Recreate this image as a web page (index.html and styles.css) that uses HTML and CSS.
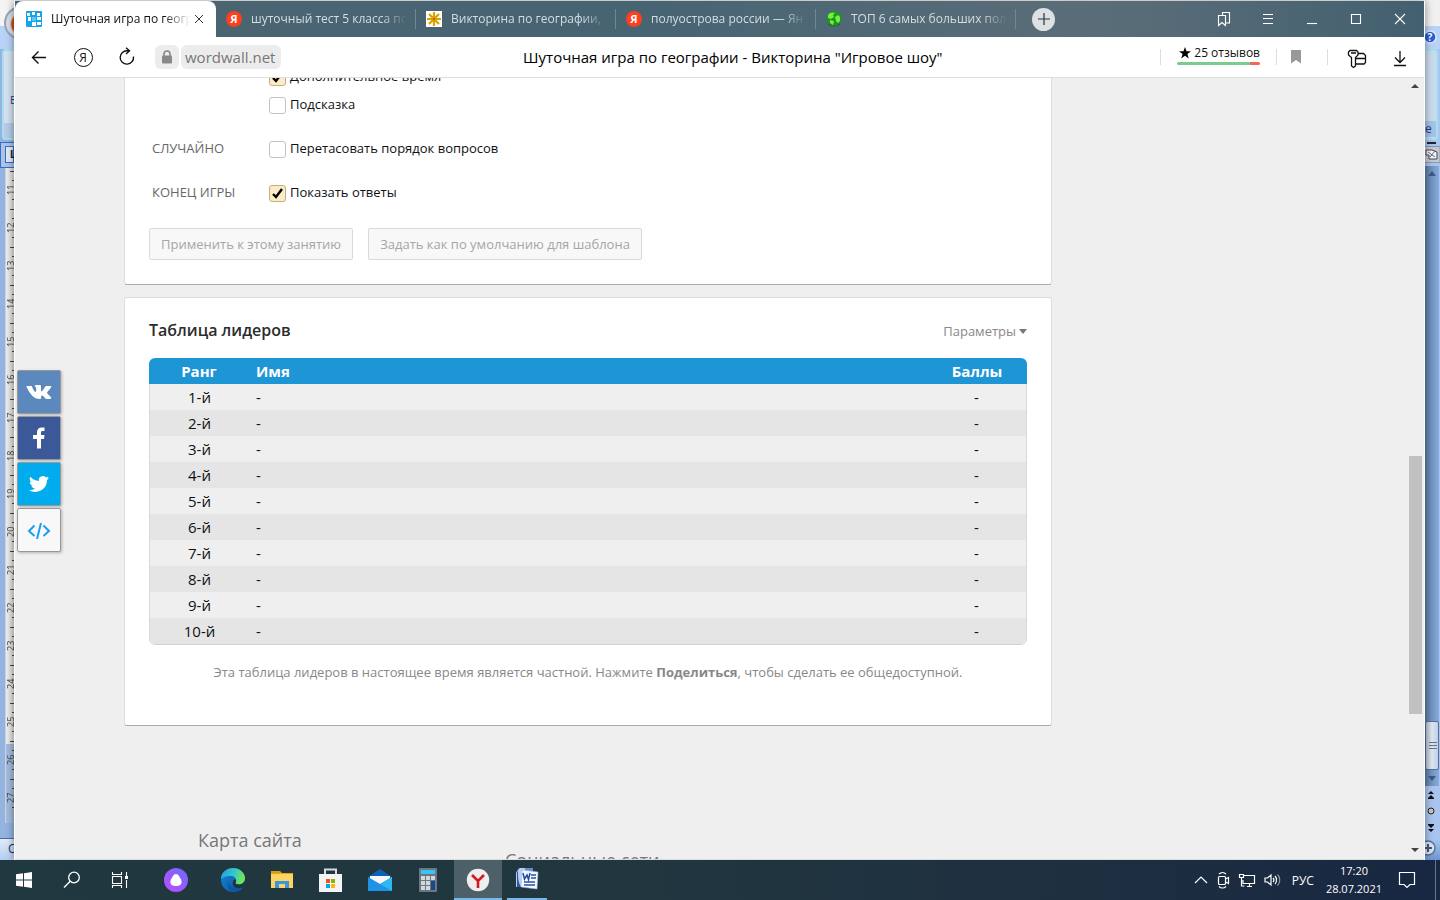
FILE: index.html
```html
<!DOCTYPE html>
<html lang="ru">
<head>
<meta charset="utf-8">
<title>Шуточная игра по географии - Викторина "Игровое шоу"</title>
<link rel="stylesheet" href="styles.css">
</head>
<body>
<div class="desktop">
  <aside class="word-left">
    <div class="word-orb-area"><span class="orb"></span></div>
    <div class="word-ribbon"><span class="ribbon-letter">Б</span></div>
    <div class="word-corner"><span>L</span></div>
    <ol class="ruler">
      <li>11</li><li>12</li><li>13</li><li>14</li><li>15</li><li>16</li><li>17</li><li>18</li><li>19</li><li>20</li><li>21</li><li>22</li><li>23</li><li>24</li><li>25</li><li>26</li><li>27</li>
    </ol>
    <div class="word-status">С</div>
  </aside>

  <main class="window">
    <header class="tabbar">
      <div class="tab tab-active">
        <svg class="favicon" viewBox="0 0 16 16"><rect width="16" height="16" rx="1" fill="#12a5ee"/><g fill="#fff"><path d="M1 2h3v3H1zM6 1h3v3H6zM11 2h3v3h-3zM2 6h3v4H2zM11 6h4v3h-4zM6 11h4v4H6zM11 11h4v3h-4z"/><path d="M6 6h4v4H6z" fill="#5ec6f6"/></g></svg>
        <span class="tab-title">Шуточная игра по геогр</span>
        <button class="tab-close" aria-label="Закрыть"><svg width="10" height="10" viewBox="0 0 10 10"><path d="M1 1l8 8M9 1l-8 8" stroke="#333" fill="none"/></svg></button>
      </div>
      <div class="tab">
        <span class="favicon ya">Я</span>
        <span class="tab-title">шуточный тест 5 класса по</span>
      </div>
      <div class="tab">
        <svg class="favicon" viewBox="0 0 16 16"><rect width="16" height="16" fill="#fff"/><g stroke="#d3a600" stroke-width="2.2"><path d="M8 1v14M1 8h14M3 3l10 10M13 3L3 13"/></g><circle cx="8" cy="8" r="2" fill="#e59a00"/><circle cx="8" cy="8" r="1" fill="#c43"/></svg>
        <span class="tab-title">Викторина по географии,</span>
      </div>
      <div class="tab">
        <span class="favicon ya">Я</span>
        <span class="tab-title">полуострова россии — Ян</span>
      </div>
      <div class="tab">
        <svg class="favicon" viewBox="0 0 16 16"><ellipse cx="8" cy="13" rx="6" ry="2.500" fill="#3e5547"/><circle cx="8" cy="7.500" r="7.300" fill="#159c18"/><path d="M2 4c2-3 5-3 7-2L7 4l1 2-3 2-3-1zM9 6l3-2 2 2v4l-2 2-2-2zM4 9l4 1-1 4-3-2z" fill="#7bea45"/></svg>
        <span class="tab-title">ТОП 6 самых больших пол</span>
      </div>
      <button class="new-tab" aria-label="Новая вкладка"><svg width="12" height="12" viewBox="0 0 12 12"><path d="M6 0v12M0 6h12" stroke="#26343c" stroke-width="1.200"/></svg></button>
      <div class="win-controls">
        <button aria-label="Закладки"><svg width="16" height="16" viewBox="0 0 16 16"><path d="M2.500 4.500h7v10L6 11.500l-3.500 3zM6.500 4V1.500h7V12H10" /></svg></button>
        <button aria-label="Меню"><svg width="16" height="16" viewBox="0 0 16 16"><path d="M3 3.500h10M3 7.500h10M3 12.500h10"/></svg></button>
        <button aria-label="Свернуть"><svg width="16" height="16" viewBox="0 0 16 16"><path d="M3 12.500h10"/></svg></button>
        <button aria-label="Развернуть"><svg width="16" height="16" viewBox="0 0 16 16"><path d="M3.500 3.500h9v9h-9z"/></svg></button>
        <button aria-label="Закрыть окно"><svg width="16" height="16" viewBox="0 0 16 16"><path d="M3 3l10 10M13 3L3 13"/></svg></button>
      </div>
    </header>

    <nav class="toolbar">
      <div class="nav-buttons">
        <button aria-label="Назад"><svg width="20" height="20" viewBox="0 0 20 20"><path d="M17 10.500H3.500M9.500 4.500l-6 6 6 6"/></svg></button>
        <button aria-label="Яндекс"><span class="ya-ring">Я</span></button>
        <button aria-label="Обновить"><svg width="20" height="20" viewBox="0 0 20 20"><path d="M16.500 9.500a6.700 6.700 0 1 1-6-5.700h2M9 .800l3.500 3L9 7"/></svg></button>
      </div>
      <div class="address">
        <button class="lock" aria-label="Безопасность"><svg width="12" height="14" viewBox="0 0 12 14"><path d="M3 6V4a3 3 0 0 1 6 0v2" fill="none" stroke="#888" stroke-width="1.600"/><rect x="1" y="5.500" width="10" height="8" rx="1" fill="#888"/></svg></button>
        <a class="domain" href="#">wordwall.net</a>
      </div>
      <div class="page-title">Шуточная игра по географии - Викторина "Игровое шоу"</div>
      <div class="tools">
        <button class="reviews"><span class="reviews-text"><svg width="12" height="12" viewBox="0 0 12 12"><path d="M6 0l1.500 4.200H12L8.400 6.900 9.800 11.500 6 8.700 2.200 11.500 3.600 6.900 0 4.200h4.500z"/></svg>25 отзывов</span><i class="rating"></i></button>
        <button class="tool" aria-label="В закладки"><svg width="12" height="14" viewBox="0 0 12 14"><path d="M1 0h10v13.500L6 10l-5 3.500z" fill="#999"/></svg></button>
        <button class="tool" aria-label="Пароли"><svg width="20" height="20" viewBox="0 0 20 20" fill="none" stroke="#111" stroke-width="1.300"><path d="M3 1.500h6.500l1.500 1.500v3L8.500 8.500v8.500L6.500 18.500 4.500 17V8.500L1.500 6V3zM4 4h5"/><path d="M11 4.500h5.500L18.500 6.500v7l-1.500 1.500H8.500M8.500 9.500h10"/></svg></button>
        <button class="tool plain" aria-label="Загрузки"><svg width="16" height="18" viewBox="0 0 16 18" fill="none" stroke="#111" stroke-width="1.300"><path d="M8 2v11M3 8.500l5 5 5-5M2 16.500h12"/></svg></button>
      </div>
    </nav>

    <div class="viewport">
      <div class="page">
        <section class="card settings">
          <div class="group">
            <span class="group-name"></span>
            <div class="options">
              <label class="option"><input type="checkbox" checked>Дополнительное время</label>
              <label class="option"><input type="checkbox">Подсказка</label>
            </div>
          </div>
          <div class="group">
            <span class="group-name">СЛУЧАЙНО</span>
            <div class="options"><label class="option"><input type="checkbox">Перетасовать порядок вопросов</label></div>
          </div>
          <div class="group">
            <span class="group-name">КОНЕЦ ИГРЫ</span>
            <div class="options"><label class="option"><input type="checkbox" checked>Показать ответы</label></div>
          </div>
          <div class="actions">
            <button class="btn" disabled>Применить к этому занятию</button>
            <button class="btn" disabled>Задать как по умолчанию для шаблона</button>
          </div>
        </section>

        <section class="card leaders">
          <div class="leaders-head">
            <h2>Таблица лидеров</h2>
            <button class="params">Параметры<i class="caret"></i></button>
          </div>
          <div class="table-wrap">
            <table>
              <thead><tr><th class="rank">Ранг</th><th class="name">Имя</th><th class="score">Баллы</th></tr></thead>
              <tbody>
                <tr><td class="rank">1-й</td><td class="name">-</td><td class="score">-</td></tr>
                <tr><td class="rank">2-й</td><td class="name">-</td><td class="score">-</td></tr>
                <tr><td class="rank">3-й</td><td class="name">-</td><td class="score">-</td></tr>
                <tr><td class="rank">4-й</td><td class="name">-</td><td class="score">-</td></tr>
                <tr><td class="rank">5-й</td><td class="name">-</td><td class="score">-</td></tr>
                <tr><td class="rank">6-й</td><td class="name">-</td><td class="score">-</td></tr>
                <tr><td class="rank">7-й</td><td class="name">-</td><td class="score">-</td></tr>
                <tr><td class="rank">8-й</td><td class="name">-</td><td class="score">-</td></tr>
                <tr><td class="rank">9-й</td><td class="name">-</td><td class="score">-</td></tr>
                <tr><td class="rank">10-й</td><td class="name">-</td><td class="score">-</td></tr>
              </tbody>
            </table>
          </div>
          <p class="note">Эта таблица лидеров в настоящее время является частной. Нажмите <b>Поделиться</b>, чтобы сделать ее общедоступной.</p>
        </section>

        <footer class="footer">
          <h3>Карта сайта</h3>
          <h3 class="social-title">Социальные сети</h3>
        </footer>
      </div>

      <div class="share">
        <a class="share-btn vk" href="#" aria-label="ВКонтакте"><svg width="26" height="16" viewBox="0 0 26 16"><path d="M1 2h4c.8 0 1 .5 1.300 1.200C7.200 5.500 8.500 8 9.500 8c1 0 1-4 .2-5C9.300 2.400 8.500 2.500 8.500 2c.4-.8 1.600-1 3-1h2c1.200 0 1.500.5 1.500 1.500v4c0 1 .6 1.100 1.200.5C17.500 5.700 18.500 4 19.300 2.600c.3-.5.6-.6 1.200-.6h4c.8 0 1 .4.6 1.200C24 5.500 21 8 21 8.700c0 .8 3 3 4 4.600.5.800 0 1.700-1 1.700h-3.500c-1.500 0-3-3.500-4.500-3.500-1 0-.8 1.200-.9 2.500 0 .7-.5 1-1.400 1C8 15 4.500 11 .7 3.300.3 2.500.5 2 1 2z" fill="#fff"/></svg></a>
        <a class="share-btn fb" href="#" aria-label="Facebook"><svg width="14" height="22" viewBox="0 0 14 22"><path d="M5 21.500V12H1V8h4V5.500C5 2 6.800.5 9.800.5H12.500V4h-2C9.200 4 9 4.800 9 5.800V8h3.500l-.5 4H9v9.500z" fill="#fff"/></svg></a>
        <a class="share-btn tw" href="#" aria-label="Twitter"><svg width="22" height="18" viewBox="0 0 22 18"><path d="M21 3c-.7.300-1.500.5-2.300.6.800-.5 1.500-1.300 1.800-2.200-.8.500-1.700.8-2.600 1A4.100 4.100 0 0 0 10.900 6C7.500 5.900 4.500 4.300 2.400 1.800a4 4 0 0 0 1.300 5.400c-.7 0-1.300-.2-1.900-.5 0 2 1.400 3.700 3.300 4-.6.200-1.200.2-1.800.1.500 1.600 2 2.800 3.800 2.800A8.200 8.200 0 0 1 1 15.300 11.600 11.600 0 0 0 7.300 17C15 17 19.200 10.700 19 5.100c.8-.6 1.500-1.300 2-2.100z" fill="#fff"/></svg></a>
        <a class="share-btn embed" href="#" aria-label="Код"><svg width="24" height="18" viewBox="0 0 24 18"><path d="M7.500 4.500L2 10l5.500 5M16.500 4.500L22 10l-5.500 5M14 2l-4 16" fill="none" stroke="#1b9df0" stroke-width="2"/></svg></a>
      </div>

      <div class="scrollbar">
        <i class="arrow up"></i>
        <div class="track"><div class="thumb"></div></div>
        <i class="arrow down"></i>
      </div>
    </div>
  </main>

  <aside class="word-right">
    <div class="wr-title"></div>
    <div class="wr-help"><svg width="15" height="16" viewBox="0 0 15 16"><circle cx="5" cy="8" r="6" fill="#2b5fd0" stroke="#dcebff" stroke-width="1.400"/><text x="5" y="12" text-anchor="middle" font-size="10" font-weight="700" font-family="Open Sans, sans-serif" fill="#fff">?</text></svg></div>
    <div class="wr-ribbon"><span>е</span></div>
    <div class="wr-view"><svg width="15" height="26" viewBox="0 0 15 26"><path d="M2 3h9" stroke="#223" stroke-width="2"/><path d="M0 6.500h15v16H0" fill="#c5c8d2" stroke="#8e97ab"/><path d="M1 10h6l5 2v7H4V15H1z" fill="#f5f7fa" stroke="#445"/><path d="M3 12l7 5M10 11l-5 6" stroke="#667"/></svg></div>
    <div class="wr-scroll">
      <i class="wr-tri up"></i>
      <span class="wr-thumb"></span>
      <i class="wr-tri"></i>
    </div>
    <div class="wr-nav"><svg width="15" height="52" viewBox="0 0 15 52"><g fill="#111"><path d="M3 8l3-3 3 3zM3 12l3-3 3 3zM3 39h6l-3 3zM3 43h6l-3 3z"/><path d="M3 12h6v1H3zM3 38h6v1H3z"/></g><circle cx="6" cy="25" r="3" fill="#c8c8bd" stroke="#222"/></svg></div>
    <div class="wr-zoom"><svg width="15" height="20" viewBox="0 0 15 20"><circle cx="3" cy="10" r="7" fill="#d8e4f2" stroke="#5a7396" stroke-width="1.500"/><path d="M-1 10h8M3 6v8" stroke="#44597a" stroke-width="2"/></svg></div>
  </aside>
</div>

<footer class="taskbar">
  <div class="apps">
    <button class="app" aria-label="Пуск"><svg width="16" height="16" viewBox="0 0 16 16"><path d="M0 2.300l7-1v6.200H0zM8 1.200L16 0v7.500H8zM0 8.500h7v6.200l-7-1zM8 8.500h8V16l-8-1.200z" fill="#fff"/></svg></button>
    <button class="app" aria-label="Поиск"><svg width="18" height="18" viewBox="0 0 18 18"><circle cx="11" cy="6.500" r="5.300" fill="none" stroke="#fff" stroke-width="1.300"/><path d="M7.200 10.300L1 16.500" stroke="#fff" stroke-width="1.400"/></svg></button>
    <button class="app" aria-label="Представление задач"><svg width="18" height="16" viewBox="0 0 18 16"><g fill="none" stroke="#fff" stroke-width="1.100"><path d="M1.500 0v2.500h9V0M1.500 4.500h9v7h-9zM1.500 16v-2.500h9V16M15.500 0v4M15.500 8v8"/></g><path d="M14 4h3v3h-3z" fill="#fff"/></svg></button>
    <button class="app app-alice" aria-label="Алиса"><svg width="24" height="24" viewBox="0 0 24 24"><defs><linearGradient id="al" x1="0" y1="1" x2="1" y2="0"><stop offset="0" stop-color="#c04cff"/><stop offset="1" stop-color="#6a6cff"/></linearGradient></defs><circle cx="12" cy="12" r="12" fill="url(#al)"/><path d="M12 6c2 0 3 2 4.500 4.500S19 18 12 18 6 13 7.500 10.500 10 6 12 6z" fill="#fff"/></svg></button>
    <button class="app app-edge" aria-label="Edge"><svg width="24" height="24" viewBox="0 0 24 24"><defs><linearGradient id="e1" x1="0" y1="0" x2="1" y2=".3"><stop offset="0" stop-color="#1e9bea"/><stop offset=".6" stop-color="#37c8c8"/><stop offset="1" stop-color="#6ee55a"/></linearGradient><linearGradient id="e2" x1="0" y1="0" x2="1" y2="1"><stop offset="0" stop-color="#1488da"/><stop offset="1" stop-color="#0d4f9e"/></linearGradient></defs><circle cx="12" cy="12" r="12" fill="url(#e2)"/><path d="M0 11C0 4 6 0 12 0c7 0 12 5 12 10 0 4-3 6.500-6 6.500-3 0-4-1.200-3.500-2 1.500-2 .5-6-4-6.500C6 7.500 2 9 0 11z" fill="url(#e1)"/><path d="M10 8c-2 1-3 3-2.500 6 .8 5 6 7.500 12.500 5.500 1-.3 2 0 1.500.8C18 25 8 25 7 18c-.3-4 0-8 3-10z" fill="#0c59a4"/><path d="M14.500 14.500c-.5.800.5 2 3.500 2 2.500 0 5-1.500 5.800-4 .2 3-1 5-2 6.500-5 3-11 .5-10-5 .3-2 1.500-2.500 3-2.500.6 1 .4 2.200-.3 3z" fill="#20343b"/></svg></button>
    <button class="app" aria-label="Проводник"><svg width="24" height="22" viewBox="0 0 24 22"><path d="M1 2h9l2 2h11v15H1z" fill="#e3a51a"/><path d="M1 5h22v14H1z" fill="#fcd462"/><path d="M5 19v-7h14v7h-4v-4H9v4z" fill="#3a96dd"/><path d="M1 2h9v2H1z" fill="#d99c0c"/></svg></button>
    <button class="app" aria-label="Магазин"><svg width="24" height="24" viewBox="0 0 24 24"><path d="M7 6V1.500h11V6" fill="none" stroke="#d8dcdf" stroke-width="2"/><path d="M1 6h23v18H1z" fill="#f4f4f4"/><path d="M8 11h4v4H8z" fill="#f25022"/><path d="M13 11h4v4h-4z" fill="#7fba00"/><path d="M8 16h4v4H8z" fill="#00a4ef"/><path d="M13 16h4v4h-4z" fill="#ffb900"/></svg></button>
    <button class="app app-mail" aria-label="Почта"><svg width="24" height="23" viewBox="0 0 24 23"><path d="M0 8l12-8 12 8v3H0z" fill="#0b62b4"/><path d="M2 7h20v8H2z" fill="#f4f6f8"/><path d="M0 8l12 7 12-7v14H0z" fill="#1e93e6"/><path d="M24 8L12 15l12 7z" fill="#2eb8f3"/></svg></button>
    <button class="app" aria-label="Калькулятор"><svg width="18" height="24" viewBox="0 0 18 24"><rect width="18" height="24" rx="1" fill="#6d7781"/><path d="M2 2h14v4H2z" fill="#37c5f2"/><path d="M2 8h4v4H2zM7 8h4v4H7zM12 8h4v4h-4zM2 13h4v4H2zM7 13h4v4H7zM2 18h4v4H2zM7 18h4v4H7z" fill="#d3d8dd"/><path d="M12 13h4v9h-4z" fill="#164a8c"/></svg></button>
    <button class="app app-active" aria-label="Яндекс Браузер"><svg width="24" height="24" viewBox="0 0 24 24"><circle cx="12" cy="12" r="11.200" fill="#eee"/><path d="M6 7l6 6 6-6M12 12v8" fill="none" stroke="#d8181f" stroke-width="2.600"/></svg></button>
    <button class="app app-running" aria-label="Word"><svg width="24" height="24" viewBox="0 0 24 24"><path d="M4 1h14v19H1V5z" fill="#5f8bd8"/><path d="M1 6l4-5h5v19H1z" fill="#b9d0f3"/><path d="M3 4c0 6 0 11 3 16H2V5z" fill="#2c56a8"/><path d="M7 3l16 2-1 17L6 20z" fill="#f6f9ff" stroke="#9eb6dc" stroke-width=".6"/><path d="M16 8h5M16 11h5M9 15h11M9 18h11" stroke="#2951a4" stroke-width="1.500"/><path d="M8 6l1.500 6L12 8l1.500 4.500L15 6" fill="none" stroke="#2348a0" stroke-width="1.500"/></svg></button>
  </div>
  <div class="tray">
    <svg width="14" height="10" viewBox="0 0 14 10"><path d="M1 8l6-6 6 6"/></svg>
    <svg width="14" height="18" viewBox="0 0 14 18"><rect x="2.500" y="5.500" width="7" height="8" rx="1"/><path d="M9.500 8l3-1.500v6L9.500 11M3 3c2-2 5-2 7 0M3 15.500c2 2 5 2 7 0"/></svg>
    <svg width="18" height="16" viewBox="0 0 18 16"><path d="M6 3.500h10.500v8H5V8M9 14.500h5M11.500 11.500v3M1.500 2.500h4v3h-4zM3.500 6v8h3"/></svg>
    <svg width="17" height="16" viewBox="0 0 17 16"><path d="M1 6h2.500L7 3v10l-3.500-3H1zM9 6c1 1.200 1 3 0 4M11 4c2 2.200 2 6 0 8"/><path d="M13.500 2.500c3 3 3 8 0 11" opacity=".5"/></svg>
    <span class="lang">РУС</span>
    <div class="clock"><time>17:20</time><time>28.07.2021</time></div>
    <svg width="18" height="18" viewBox="0 0 18 18"><path d="M1.500 1.500h15v12H12l-3 3-3-3H1.500z"/></svg>
    <i class="peek"></i>
  </div>
</footer>
</body>
</html>
```

FILE: styles.css
```css
* { box-sizing: border-box; }
html, body { height: 100%; }
body {
  margin: 0;
  display: flex;
  flex-direction: column;
  overflow: hidden;
  font-family: "Open Sans", "Noto Sans", sans-serif;
  font-size: 13px;
  color: #111;
  background: #fff;
}
button { font: inherit; color: inherit; background: none; border: 0; padding: 0; }
a { color: inherit; text-decoration: none; }
h2, h3, p, ol { margin: 0; padding: 0; }
svg { display: block; flex: none; }

.desktop { flex: 1; min-height: 0; display: flex; }

/* Word window behind, left edge */
.word-left {
  flex: none;
  width: 14px;
  display: flex;
  flex-direction: column;
  overflow: hidden;
  background: #94b4df;
}
.word-orb-area {
  height: 49px;
  flex: none;
  padding: 6px 0 0 4px;
  background: linear-gradient(#f4f4f4 26px, #b9d3f8 26px);
}
.orb {
  display: block;
  width: 34px;
  height: 34px;
  border-radius: 50%;
  border: 2px solid #97a5b9;
  background: radial-gradient(circle at 16px 16px, #cf4b18 10px, #d9dee6 12px);
}
.word-ribbon {
  height: 91px;
  flex: none;
  margin-left: 2px;
  padding: 42px 0 0 6px;
  border: 2px solid #a8dff0;
  border-right: 0;
  border-radius: 4px 0 0 4px;
  background: linear-gradient(#d3e1f0 72px, #b5cbe7 72px);
}
.ribbon-letter { display: block; font-size: 11px; line-height: 14px; color: #1c3f86; }
.word-corner {
  height: 26px;
  flex: none;
  margin-top: 2px;
  padding: 3px 0 0 4px;
  border: 1px solid #3f6bc0;
  border-right: 0;
  background: #a9c4ec;
}
.word-corner span {
  display: block;
  height: 17px;
  padding-left: 4px;
  border: 1px solid #3f6bc0;
  background: #e2ebf8;
  font-size: 10px;
  line-height: 15px;
  font-weight: 700;
}
.ruler {
  flex: 1;
  min-height: 0;
  overflow: hidden;
  margin: 0 0 15px 5px;
  padding-top: 3px;
  border-left: 1px solid #c6d6ec;
  background: linear-gradient(90deg, #eee, #dcdcdc) 0 0 / 100% 576px no-repeat, #a4bbdc;
  list-style: none;
}
.ruler li {
  width: 12px;
  height: 38px;
  font-size: 9px;
  line-height: 9px;
  color: #444;
  writing-mode: vertical-rl;
  transform: rotate(180deg);
  text-align: center;
  background:
    linear-gradient(#444, #444) 0 37px / 8px 1px no-repeat,
    linear-gradient(#444, #444) 4px 28px / 2px 1px no-repeat,
    linear-gradient(#444, #444) 4px 9px / 2px 1px no-repeat;
}
.word-status {
  height: 22px;
  flex: none;
  padding-left: 8px;
  border-top: 1px solid #4a6da5;
  background: linear-gradient(#e0ecfb, #b4cdf0);
  font-size: 12px;
  line-height: 20px;
  color: #1a3470;
}

/* Browser window */
.window {
  flex: 1;
  min-width: 0;
  display: flex;
  flex-direction: column;
  margin-top: 1px;
  border: solid #fff;
  border-width: 0 1px;
  background: #efefef;
  box-shadow: 0 0 8px rgba(0, 0, 0, .45);
  position: relative;
}
.tabbar {
  height: 36px;
  flex: none;
  display: flex;
  align-items: center;
  background: linear-gradient(90deg, #48646f, #4a6472 15%, #476473 45%, #5a6d78 75%, #586c77 80%, #436070);
  color: #d5dde1;
}
.tab {
  flex: 0 1 200px;
  min-width: 0;
  height: 36px;
  display: flex;
  align-items: center;
  gap: 9px;
  padding: 0 9px 0 10px;
  position: relative;
  font-size: 12px;
}
.tab:not(.tab-active)::after {
  content: "";
  position: absolute;
  right: 0;
  top: 8px;
  height: 20px;
  width: 1px;
  background: #74868f;
}
.tab-active {
  flex-basis: 201px;
  padding: 0 12px 0 11px;
  border-radius: 8px 8px 0 0;
  background: #fff;
  color: #111;
}
.favicon { width: 16px; height: 16px; flex: none; }
.ya {
  border-radius: 50%;
  background: #fc3f1d;
  color: #fff;
  font-size: 11px;
  line-height: 16px;
  font-weight: 700;
  text-align: center;
}
.tab-title {
  flex: 1;
  min-width: 0;
  overflow: hidden;
  white-space: nowrap;
  line-height: 20px;
  -webkit-mask-image: linear-gradient(90deg, #000 calc(100% - 26px), transparent);
  mask-image: linear-gradient(90deg, #000 calc(100% - 26px), transparent);
}
.tab-close { flex: none; margin-left: -5px; }
.new-tab {
  flex: none;
  width: 23px;
  height: 23px;
  margin-left: 16px;
  border-radius: 50%;
  background: #dde1e4;
  display: grid;
  place-items: center;
}
.win-controls { margin-left: auto; display: flex; padding-right: 2px; }
.win-controls button { width: 44px; height: 36px; display: grid; place-items: center; }
.win-controls path { fill: none; stroke: #fff; stroke-width: 1.1; }

.toolbar {
  height: 41px;
  flex: none;
  display: flex;
  align-items: center;
  border-bottom: 1px solid #ddd;
  background: #fff;
}
.nav-buttons { display: flex; padding-left: 2px; }
.nav-buttons button { width: 44px; height: 40px; display: grid; place-items: center; }
.nav-buttons path { fill: none; stroke: #111; stroke-width: 1.4; }
.ya-ring {
  width: 19px;
  height: 19px;
  border: 1px solid #111;
  border-radius: 50%;
  font-size: 12px;
  line-height: 17px;
  text-align: center;
}
.address { display: flex; gap: 2px; padding-left: 6px; }
.lock, .domain { height: 24px; border-radius: 6px; background: #ececec; }
.lock { width: 24px; display: grid; place-items: center; }
.domain { padding: 0 6px 0 4px; font-size: 15px; line-height: 24px; color: #777; }
.page-title { flex: 1; padding-left: 24px; text-align: center; white-space: nowrap; font-size: 15px; line-height: 24px; color: #000; }
.tools { display: flex; align-items: center; }
.reviews {
  height: 16px;
  padding: 0 16px;
  border: solid #ddd;
  border-width: 0 1px;
  display: flex;
  flex-direction: column;
  justify-content: center;
  font-size: 12px;
  line-height: 18px;
}
.reviews-text { display: flex; align-items: center; gap: 3px; margin-top: -6px; padding-left: 2px; }
.rating {
  width: 100%;
  height: 3px;
  flex: none;
  border-radius: 2px;
  background: linear-gradient(90deg, #7bcb90 88%, #ef6a55 88%);
}
.tool { width: 51px; height: 16px; border-right: 1px solid #ddd; display: grid; place-items: center; padding-right: 12px; }
.tool + .tool { border-right: 0; width: 45px; padding: 0 0 0 12px; }
.tool.plain { width: 51px; padding: 0 0 0 2px; }

.viewport { flex: 1; min-height: 0; display: flex; position: relative; overflow: hidden; border-bottom: 1px solid #dcdcdc; }
.page { flex: 1; min-width: 0; padding-left: 109px; margin-top: -15px; }
.card {
  max-width: 928px;
  padding: 0 24px;
  background: #fff;
  border: 1px solid #dedede;
  border-bottom-color: #aaa;
  border-radius: 3px;
}
.settings { border-top: 0; border-radius: 0 0 3px 3px; padding-bottom: 24px; }
.group { display: flex; margin-bottom: 16px; padding-left: 3px; }
.group-name { width: 117px; line-height: 27px; color: #666; }
.option { display: flex; align-items: center; gap: 4px; height: 28px; line-height: 20px; padding-bottom: 2px; }
.option input {
  appearance: none;
  width: 17px;
  height: 17px;
  margin: 3px 0 0;
  border: 1px solid #c2c2c2;
  border-radius: 3px;
  background: #fff;
}
.option input:checked {
  border-color: #c5ae7d;
  background: #fcebc8 url("data:image/svg+xml,%3Csvg xmlns='http://www.w3.org/2000/svg' viewBox='0 0 15 15'%3E%3Cpath d='M3 8l3 3 6-8' fill='none' stroke='%23000' stroke-width='2.400'/%3E%3C/svg%3E") center / 15px no-repeat;
}
.actions { display: flex; gap: 15px; padding-top: 5px; }
.btn {
  height: 32px;
  padding: 0 11px;
  border: 1px solid #dadada;
  border-radius: 2px;
  background: #f8f8f8;
  color: #a6a6a6;
}
.leaders { margin-top: 12px; padding-top: 20px; padding-bottom: 43px; }
.leaders-head { display: flex; justify-content: space-between; align-items: center; height: 24px; margin-bottom: 16px; }
h2 { font-size: 16px; line-height: 24px; font-weight: 600; color: #2c2c2c; }
.params { display: flex; align-items: center; gap: 3px; padding-top: 2px; color: #888; }
.caret { border: solid transparent; border-width: 5px 4px 0; border-top-color: #777; }
.table-wrap { border-radius: 6px; overflow: hidden; }
table { width: 100%; border-collapse: separate; border-spacing: 0; font-size: 15px; table-layout: fixed; border-bottom: 1px solid #d2d2d2; border-radius: 6px; }
th, td { height: 26px; padding: 0; line-height: 24px; }
th { background: #1e95d4; color: #fff; font-weight: 700; }
tbody tr { background: #efefef; }
tbody tr:nth-child(even) { background: #e5e5e5; }
.rank, .score { width: 100px; text-align: center; }
.name { text-align: left; padding-left: 7px; }
td.rank { border-left: 1px solid #d8d8d8; }
td.score { border-right: 1px solid #d8d8d8; }
.note { margin-top: 17px; text-align: center; line-height: 20px; color: #888; }

.footer { display: flex; padding: 102px 0 0 74px; color: #777; }
h3 { width: 307px; font-size: 18px; line-height: 24px; font-weight: 400; }
.social-title { padding-top: 20px; }

.share { position: absolute; left: 2px; top: 292px; display: grid; gap: 2px; }
.share-btn {
  width: 44px;
  height: 44px;
  display: grid;
  place-items: center;
  border: 1px solid #999;
  border-radius: 2px;
  box-shadow: 1px 1px 3px rgba(0, 0, 0, .25);
}
.vk { background: #5b88bd; }
.fb { background: #3b5998; }
.tw { background: #00acee; }
.embed { background: #f8f8f9; }

.scrollbar { flex: none; width: 17px; display: flex; flex-direction: column; align-items: center; padding: 6px 1px 7px 0; }
.arrow { border: solid transparent; border-width: 0 4px 4px; border-bottom-color: #444; }
.arrow.down { border-width: 4px 4px 0; border-top-color: #444; }
.track { flex: 1; width: 13px; display: flex; flex-direction: column; }
.thumb { flex: 0 0 34%; background: #c1c1c1; }
.track::before { content: ""; flex: 0 0 48.4%; }

/* Word window behind, right edge */
.word-right { flex: none; width: 15px; display: flex; flex-direction: column; overflow: hidden; background: #a9c5ef; }
.wr-title { height: 26px; flex: none; background: #f0f0f0; }
.wr-help { height: 23px; flex: none; padding-top: 3px; background: #b9d3f8; }
.wr-ribbon {
  height: 91px;
  flex: none;
  margin-right: 2px;
  padding-top: 70px;
  border: 2px solid #a8dff0;
  border-left: 0;
  border-radius: 0 4px 4px 0;
  background: #cbdcee;
  font-size: 12px;
  line-height: 16px;
  color: #1c3f86;
}
.wr-ribbon span { display: block; background: #a5c3e8; }
.wr-view { height: 26px; flex: none; }
.wr-scroll {
  flex: 1;
  min-height: 0;
  display: flex;
  flex-direction: column;
  align-items: center;
  margin-right: 1px;
  padding: 5px 0;
  background: linear-gradient(90deg, #5f7fa8, #86abdc);
}
.wr-tri { border: solid transparent; border-width: 5px 4px 0; border-top-color: #3d5880; }
.wr-tri.up { border-width: 0 4px 5px; border-bottom-color: #3d5880; }
.wr-thumb {
  width: 14px;
  height: 49px;
  margin: auto 0 6px;
  border: 1px solid #54719f;
  border-radius: 2px;
  background: repeating-linear-gradient(#66758a 0 1px, transparent 1px 3px) 3px 20px / 8px 9px no-repeat, linear-gradient(90deg, #bcc5d2, #e0e8f2, #c0cfe4);
}
.wr-nav { height: 52px; flex: none; }
.wr-zoom { height: 22px; flex: none; background: linear-gradient(#a9c8f2, #6d96cf); }

/* Taskbar */
.taskbar {
  height: 40px;
  flex: none;
  display: flex;
  justify-content: space-between;
  position: relative;
  background: linear-gradient(90deg, #20383f, #21363f 45%, #1e2f40 75%, #182742);
  color: #fff;
}
.apps { display: flex; }
.app { width: 48px; height: 40px; display: grid; place-items: center; }
.app-alice { width: 64px; }
.app-edge { width: 50px; }
.app-mail { width: 50px; padding-left: 2px; }
.app-active { background: #4d6067; border-bottom: 2px solid #76b9ed; padding-top: 2px; margin-left: 2px; }
.app-running { width: 40px; margin-left: 5px; border-bottom: 2px solid #76b9ed; }
.tray { display: flex; align-items: center; gap: 8px; }
.tray path, .tray rect { fill: none; stroke: #fff; stroke-width: 1.2; }
.lang { font-size: 12px; padding: 0 4px 0 3px; }
.clock { display: grid; font-size: 11px; line-height: 18px; text-align: center; padding-right: 8px; }
.peek { width: 1px; height: 40px; margin: 0 4px 0 11px; background: #6b7685; }
```
